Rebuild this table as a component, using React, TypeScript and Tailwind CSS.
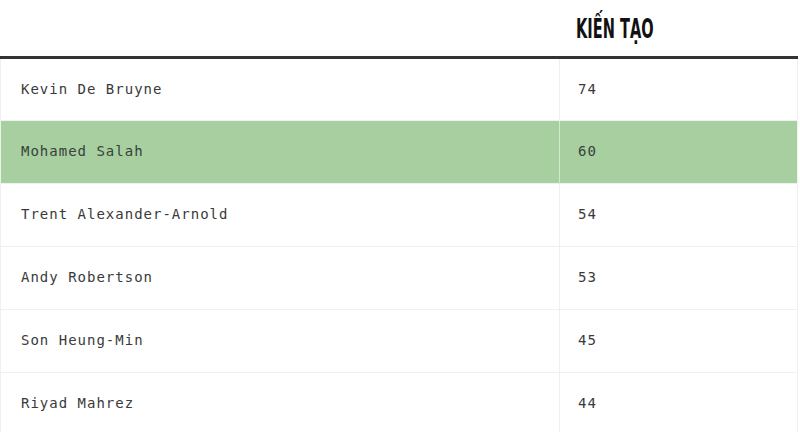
const rows = [
  { name: "Kevin De Bruyne", value: 74 },
  { name: "Mohamed Salah", value: 60, highlight: true },
  { name: "Trent Alexander-Arnold", value: 54 },
  { name: "Andy Robertson", value: 53 },
  { name: "Son Heung-Min", value: 45 },
  { name: "Riyad Mahrez", value: 44 },
];

export default function App() {
  return (
    <div className="w-[800px] h-[432px] overflow-hidden bg-white">
      <table className="w-[798px] border-collapse">
        <thead>
          <tr className="border-b-[3px] border-[#333333]">
            <th className="w-[559px] h-[57px]" />
            <th className="h-[57px] pl-[16px] pt-[3px] text-left align-middle">
              <span
                className="inline-block origin-left scale-x-[0.6] text-[27px] font-bold leading-none tracking-[0px] text-[#111111]"
                style={{ fontFamily: '"Liberation Sans Narrow", "DejaVu Sans Condensed", "Liberation Sans", sans-serif' }}
              >
                KIẾN TẠO
              </span>
            </th>
          </tr>
        </thead>
        <tbody className="font-['DejaVu_Sans_Mono',monospace] text-[14px] tracking-[1px]">
          {rows.map((r) => (
            <tr
              key={r.name}
              className={
                "h-[63px] border-b border-l border-r border-[#f0f0f0] " +
                (r.highlight ? "bg-[#a8cf9f] text-[#36423a]" : "text-[#3a3a3a]")
              }
            >
              <td className="pl-[20px] align-middle">{r.name}</td>
              <td
                className={
                  "pl-[18px] align-middle border-l " +
                  (r.highlight ? "border-[#d3e8cf]" : "border-[#efefef]")
                }
              >
                {r.value}
              </td>
            </tr>
          ))}
        </tbody>
      </table>
    </div>
  );
}
